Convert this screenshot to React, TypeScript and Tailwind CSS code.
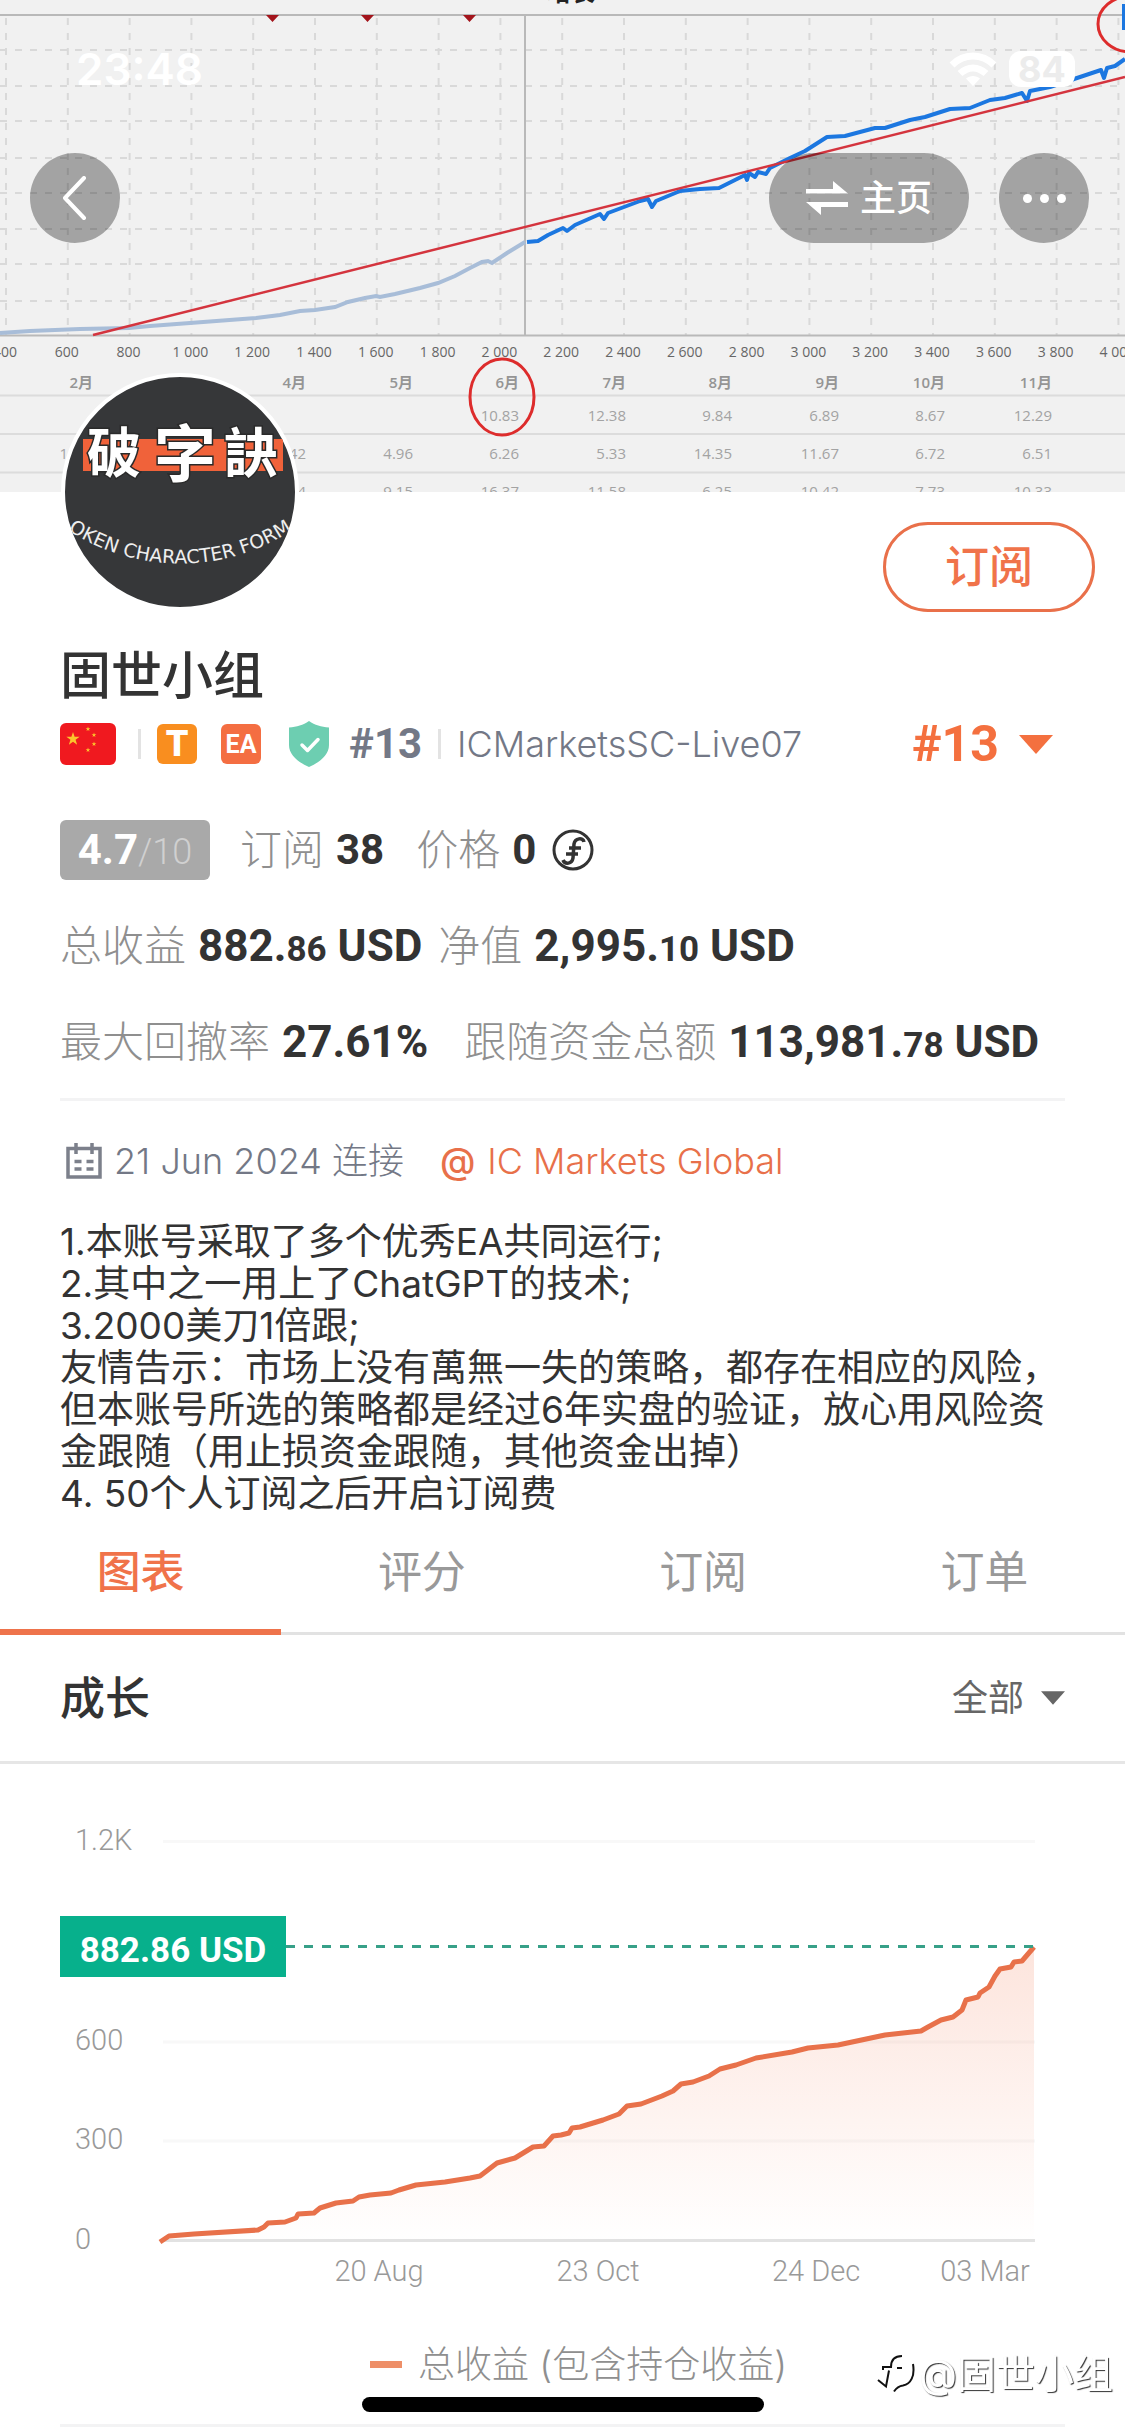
import { useState } from "react";
import { clsx } from "clsx";

const tabs = ["图表", "评分", "订阅", "订单"];

const coverTicks = [
  "400", "600", "800", "1 000", "1 200", "1 400", "1 600", "1 800", "2 000", "2 200",
  "2 400", "2 600", "2 800", "3 000", "3 200", "3 400", "3 600", "3 800", "4 000",
];

// right edge of every month column in the cover table
const coverMonths = [
  { x: 68, values: ["", "", "1", ""] },
  { x: 93, values: ["2月", "", "", ""] },
  { x: 306, values: ["4月", "", "42", "4"] },
  { x: 413, values: ["5月", "", "4.96", "9.15"] },
  { x: 519, values: ["6月", "10.83", "6.26", "16.37"] },
  { x: 626, values: ["7月", "12.38", "5.33", "11.58"] },
  { x: 732, values: ["8月", "9.84", "14.35", "6.25"] },
  { x: 839, values: ["9月", "6.89", "11.67", "10.42"] },
  { x: 945, values: ["10月", "8.67", "6.72", "7.73"] },
  { x: 1052, values: ["11月", "12.29", "6.51", "10.33"] },
];

const coverRows = [388, 421, 459, 497];

const growthLine =
  "160,478 169,472 194,470 258,466 264,463 268,459 285,458 296,454 298,450 314,449 320,444 336,439 353,437 359,433 370,431 391,429 399,426 416,421 445,418 470,414 480,412 497,399 515,394 533,383 544,382 553,372 561,371 569,369 572,364 580,363 603,356 619,350 627,342 641,340 662,332 673,327 681,320 693,318 709,312 720,305 736,301 756,294 792,288 808,284 838,281 885,271 921,267 928,263 941,256 953,253 962,246 966,236 978,233 980,229 989,223 995,212 1000,205 1011,203 1014,198 1022,197 1034,183";

const Cover = () => (
  <svg
    viewBox="0 0 1125 492"
    preserveAspectRatio="xMidYMid slice"
    className="block h-[492px] w-full bg-[#f1f1f1]"
    fontFamily="'Open Sans', 'Noto Sans CJK SC', sans-serif"
  >
    <text x="571" y="1" textAnchor="middle" fontSize="24" fontWeight="700" fill="#222">
      增长
    </text>
    <g stroke="#d9d9d9" strokeWidth="2" strokeDasharray="7 8">
      {coverTicks.map((tick, i) => (
        <line key={tick} x1={6 + i * 61.8} x2={6 + i * 61.8} y1="18" y2="335" />
      ))}
      {[50, 86, 121, 158, 193, 229, 264, 301].map((y) => (
        <line key={y} x1="0" x2="1125" y1={y} y2={y} />
      ))}
    </g>
    <path d="M0 15H1125M0 335.500H1125M525 15V335" stroke="#b9b9b9" strokeWidth="2" />
    <path d="M266 15h13l-6.500 7zM361 15h13l-6.500 7zM463 15h13l-6.500 7z" fill="#a3151c" />
    <polyline
      points="0,333 30,331 55,330 80,329 129,328 150,326 190,323 256,318 280,315 300,311 315,310 335,307 348,302 365,298 376,296 380,297 395,294 420,288 438,283 455,276 470,268 482,262 488,261 492,263 507,253 525,242"
      fill="none"
      stroke="#a8bdd8"
      strokeWidth="4"
    />
    <polyline
      points="527,242 538,241 548,235 563,228 567,231 575,225 600,214 604,219 608,213 640,201 648,199 652,207 656,201 680,191 700,189 719,188 735,180 745,175 747,180 749,173 755,177 758,172 766,174 770,168 790,158 805,151 827,137 845,136 860,132 875,128 885,128 910,120 925,117 950,109 970,108 990,100 1005,98 1022,93 1027,101 1030,91 1050,87 1062,83 1080,77 1101,70 1104,78 1107,68 1115,66 1125,59"
      fill="none"
      stroke="#1c77e0"
      strokeWidth="4"
      strokeLinejoin="round"
    />
    <path d="M93 335L1125 77" stroke="#d4343e" strokeWidth="2.500" />
    <path d="M1124 4v26" stroke="#1c77e0" strokeWidth="4" />
    <g fill="#666" fontSize="14" textAnchor="middle">
      {coverTicks.map((tick, i) => (
        <text key={tick} x={5 + i * 61.8} y="357">
          {tick}
        </text>
      ))}
    </g>
    <path d="M0 395.500H1125M0 434H1125M0 472.500H1125" stroke="#dcdcdc" strokeWidth="2" />
    {coverMonths.map((month) => (
      <g key={month.x} textAnchor="end" fontSize="15">
        {month.values.map((value, i) => (
          <text
            key={i}
            x={month.x}
            y={coverRows[i]}
            fill={i === 0 ? "#959595" : "#a3a3a3"}
            fontWeight={i === 0 ? 600 : 400}
          >
            {value}
          </text>
        ))}
      </g>
    ))}
    <g fill="none" stroke="#dd2c2c" strokeWidth="3">
      <ellipse cx="502" cy="397" rx="32" ry="38" />
      <ellipse cx="1131" cy="24" rx="33" ry="28" />
    </g>
  </svg>
);

const StatusBar = () => (
  <div className="absolute inset-x-0 top-0 flex h-[138px] items-center justify-between pr-[50px] pl-[76px] text-white">
    <span className="font-[Inter,sans-serif] text-[44px] leading-none font-semibold">23:48</span>
    <div className="flex items-center gap-3">
      <svg viewBox="0 0 48 34" className="h-[34px] w-12" fill="none" stroke="white" strokeWidth="7">
        <path d="M3 13C15 1 33 1 45 13" />
        <path d="M11 21.500C19 14 29 14 37 21.500" />
        <path d="M24 34l-7-7.500c4-3.500 10-3.500 14 0z" fill="white" stroke="none" />
      </svg>
      <div className="flex h-9 w-[66px] items-center justify-center rounded-xl bg-white font-[Inter,sans-serif] text-[36px] leading-none font-bold text-[#ececec]">
        84
      </div>
    </div>
  </div>
);

const CoverActions = () => (
  <div className="absolute inset-x-0 top-[153px] flex gap-[30px] pr-9 pl-[30px]">
    <button
      aria-label="返回"
      className="mr-auto flex size-[90px] items-center justify-center rounded-full bg-black/32"
    >
      <svg viewBox="0 0 24 44" className="h-11 w-6" fill="none" stroke="white" strokeWidth="4">
        <path d="M21 2L2 22l19 20" strokeLinecap="round" strokeLinejoin="round" />
      </svg>
    </button>
    <button className="flex h-[90px] w-[200px] items-center justify-center gap-3 rounded-full bg-black/32 text-4xl font-medium text-white">
      <svg viewBox="0 0 42 34" className="h-[34px] w-[42px]" fill="white">
        <path d="M0 8h27V0l15 12.500H0zM42 26H15v8L0 21h42z" />
      </svg>
      主页
    </button>
    <button
      aria-label="更多"
      className="flex size-[90px] items-center justify-center gap-2 rounded-full bg-black/32"
    >
      <span className="size-[9px] rounded-full bg-white" />
      <span className="size-[9px] rounded-full bg-white" />
      <span className="size-[9px] rounded-full bg-white" />
    </button>
  </div>
);

const Avatar = () => (
  <svg
    viewBox="0 0 230 230"
    className="-mt-[119px] size-[238px] shrink-0 rounded-full border-4 border-white bg-[#363739]"
  >
    <path d="M18 62H218V94H18z" fill="#f0623a" />
    <g
      fill="white"
      stroke="#2a2a2a"
      strokeWidth="3"
      paintOrder="stroke"
      fontFamily="'Noto Sans CJK TC', sans-serif"
      fontWeight="700"
      textAnchor="middle"
    >
      <text x="49" y="96" fontSize="54">破</text>
      <text x="120" y="100" fontSize="62">字</text>
      <text x="186" y="96" fontSize="54">訣</text>
    </g>
    <path id="avatar-arc" d="M-6 147A205 205 0 0 0 236 147" fill="none" />
    <text fill="#eee" fontSize="19" fontFamily="'DejaVu Sans', sans-serif" textAnchor="middle">
      <textPath href="#avatar-arc" startOffset="50%">
        OKEN CHARACTER FORM
      </textPath>
    </text>
  </svg>
);

const star = "M0-10L2.300-3.200H9.500L3.700 1.200L5.900 8.100L0 3.900L-5.900 8.100L-3.700 1.200L-9.500-3.200H-2.300z";

const Flag = () => (
  <svg viewBox="0 0 56 42" className="h-[42px] w-14 rounded-md bg-[#f0191f]" fill="#fbc52c">
    <path d={star} transform="translate(13 16) scale(.7)" />
    <path d={star} transform="translate(28 6) scale(.25)" />
    <path d={star} transform="translate(34 12) scale(.25)" />
    <path d={star} transform="translate(34 21) scale(.25)" />
    <path d={star} transform="translate(28 27) scale(.25)" />
  </svg>
);

const IconShield = () => (
  <svg viewBox="0 0 40 46" className="h-[46px] w-10">
    <path
      d="M20 0c6 4 12 6 20 6.500V24c0 10-9 17-20 22C9 41 0 34 0 24V6.500C8 6 14 4 20 0z"
      fill="#6dceb1"
    />
    <path
      d="M13 24l5.500 5.500L29 18.500"
      fill="none"
      stroke="white"
      strokeWidth="3.500"
      strokeLinecap="round"
      strokeLinejoin="round"
    />
  </svg>
);

const IconCoin = () => (
  <svg viewBox="0 0 42 42" className="size-[42px]" fill="none" stroke="#333" strokeWidth="3">
    <circle cx="21" cy="21" r="19" />
    <path
      d="M32 13c-1-5-9-4-10 2l-1 14c-1 6-8 7-10 2M17 19h12M14 25h12"
      strokeWidth="3.500"
    />
  </svg>
);

const IconCalendar = () => (
  <svg viewBox="0 0 36 36" className="size-9" fill="none" stroke="#7c808b" strokeWidth="3.500">
    <path d="M2 5.500H34V34H2zM10 0v11M26 0v11M8.500 18.500h7M20.500 18.500h7M8.500 26h7M20.500 26h7" />
  </svg>
);

const CaretDown = ({ className }: { className: string }) => (
  <svg viewBox="0 0 34 19" className={className} fill="currentColor">
    <path d="M0 0H34L17 19z" />
  </svg>
);

const Amount = ({ value, cents }: { value: string; cents: string }) => (
  <span className="ml-3 font-[Roboto,sans-serif] text-[44px] font-bold text-[#333]">
    {value}.<span className="text-[35px]">{cents}</span> USD
  </span>
);

const GrowthChart = () => (
  <svg
    viewBox="0 0 1125 540"
    className="block h-auto w-full"
    fontFamily="Roboto, sans-serif"
    fontWeight="300"
  >
    <defs>
      <linearGradient id="growth-fill" x1="0" y1="0" x2="0" y2="1">
        <stop offset="0" stopColor="#f26b3f" stopOpacity=".18" />
        <stop offset="1" stopColor="#f26b3f" stopOpacity="0" />
      </linearGradient>
    </defs>
    <path d="M163 77.500H1035M163 278H1035M163 377H1035" stroke="#f8f8f8" strokeWidth="3" />
    <polygon points={`${growthLine} 1034,476 160,476`} fill="url(#growth-fill)" />
    <path d="M160 476.500H1035" stroke="#e2e2e2" strokeWidth="3" />
    <polyline
      points={growthLine}
      fill="none"
      stroke="#e8714a"
      strokeWidth="5"
      strokeLinejoin="round"
    />
    <path d="M286 182.500H1035" stroke="#37a088" strokeWidth="3" strokeDasharray="9 9" />
    <path d="M60 152H286V213H60z" fill="#07b08c" />
    <text x="173" y="198" fontSize="35" fontWeight="700" fill="white" textAnchor="middle">
      882.86 USD
    </text>
    <g fill="#999" fontSize="29">
      <text x="75" y="86">1.2K</text>
      <text x="75" y="286">600</text>
      <text x="75" y="385">300</text>
      <text x="75" y="485">0</text>
      <text x="379" y="517" textAnchor="middle">20 Aug</text>
      <text x="598" y="517" textAnchor="middle">23 Oct</text>
      <text x="816" y="517" textAnchor="middle">24 Dec</text>
      <text x="985" y="517" textAnchor="middle">03 Mar</text>
    </g>
  </svg>
);

const Watermark = () => (
  <div className="fixed right-3 bottom-8 flex items-center gap-1 text-[39px] leading-[60px] text-white [text-shadow:1px_1px_1px_#333]">
    <svg viewBox="0 0 38 42" className="h-[42px] w-[38px]" fill="none" stroke="#111" strokeWidth="2">
      <path d="M1 27l8 6.500 3-16M6 17v-3h8c0-7 3-11 11-11M20 15h5M36 11c2 12-2 20-10 21.500-4 .5-7 3-9 6" />
    </svg>
    @固世小组
  </div>
);

const App = () => {
  const [activeTab, setActiveTab] = useState(tabs[0]);

  return (
    <div className="bg-white font-[Inter,'Noto_Sans_CJK_SC',sans-serif] text-[#333]">
      <header className="relative">
        <Cover />
        <StatusBar />
        <CoverActions />
      </header>

      <section className="relative">
        <div className="flex items-start justify-between pr-[30px] pl-[61px]">
          <Avatar />
          <button className="mt-[30px] h-[90px] w-[212px] rounded-full border-3 border-[#e9704a] text-[44px] leading-none font-medium text-[#f0734a]">
            订阅
          </button>
        </div>

        <div className="px-[60px]">
          <h1 className="mt-8 text-[51px] leading-[64px] font-medium">固世小组</h1>
          <div className="mt-3 flex h-12 items-center">
            <Flag />
            <span className="mr-4 ml-[22px] h-[30px] w-[3px] bg-[#e3e3e3]" />
            <span className="flex size-10 items-center justify-center rounded-md bg-[#f98e1f] font-[Roboto,sans-serif] text-[36px] leading-none font-black text-white">
              T
            </span>
            <span className="ml-6 flex size-10 items-center justify-center rounded-md bg-[#f46e42] font-[Roboto,sans-serif] text-[25px] leading-none font-bold text-white">
              EA
            </span>
            <span className="ml-7">
              <IconShield />
            </span>
            <span className="ml-5 font-[Roboto,sans-serif] text-[42px] leading-none font-bold text-[#737886]">
              #13
            </span>
            <span className="mx-4 h-[30px] w-[3px] bg-[#e3e3e3]" />
            <span className="text-4xl leading-none font-light text-[#737886]">
              ICMarketsSC-Live07
            </span>
            <button className="mr-3 ml-auto flex items-center gap-5 font-[Roboto,sans-serif] text-[50px] leading-none font-bold text-[#f4703f]">
              #13
              <CaretDown className="h-[19px] w-[34px]" />
            </button>
          </div>

          <div className="mt-[52px] flex flex-col gap-9 text-[42px] leading-[60px] font-light whitespace-nowrap text-[#8f8f8f]">
            <div className="flex h-[60px] items-center">
              <span className="flex h-[60px] w-[150px] items-baseline justify-center rounded-md bg-[#a9a9a9] font-[Roboto,sans-serif]">
                <b className="text-[42px] font-bold text-white">4.7</b>
                <span className="text-4xl font-light text-[#d0d0d0]">/10</span>
              </span>
              <span className="ml-[30px]">订阅</span>
              <b className="ml-3 font-[Roboto,sans-serif] font-bold text-[#333]">38</b>
              <span className="ml-8">价格</span>
              <b className="mr-4 ml-3 font-[Roboto,sans-serif] font-bold text-[#333]">0</b>
              <IconCoin />
            </div>
            <div className="flex h-[60px] items-baseline">
              总收益
              <Amount value="882" cents="86" />
              <span className="ml-4">净值</span>
              <Amount value="2,995" cents="10" />
            </div>
            <div className="flex h-[60px] items-baseline">
              最大回撤率
              <b className="ml-3 font-[Roboto,sans-serif] text-[44px] font-bold text-[#333]">
                27.61%
              </b>
              <span className="ml-9">跟随资金总额</span>
              <Amount value="113,981" cents="78" />
            </div>
          </div>

          <hr className="mt-[26px] h-[3px] border-0 bg-[#f3f3f4]" />

          <div className="mt-9 flex h-12 items-center pl-[6px] text-4xl leading-none font-light">
            <IconCalendar />
            <span className="ml-3 text-[#737886]">21 Jun 2024 连接</span>
            <a href="#broker" className="ml-9 flex items-center gap-3 text-[#e8704a]">
              <span className="font-medium">@</span>
              <span>IC Markets Global</span>
            </a>
          </div>

          <p className="mt-9 text-[37px] leading-[42px] whitespace-pre-line">
            {`1.本账号采取了多个优秀EA共同运行;
            2.其中之一用上了ChatGPT的技术;
            3.2000美刀1倍跟;
            友情告示：市场上没有萬無一失的策略，都存在相应的风险，但本账号所选的策略都是经过6年实盘的验证，放心用风险资金跟随（用止损资金跟随，其他资金出掉）
            4. 50个人订阅之后开启订阅费`}
          </p>
        </div>
      </section>

      <nav className="flex h-[120px] border-b-3 border-[#e2e2e2]">
        {tabs.map((tab) => (
          <button
            key={tab}
            onClick={() => setActiveTab(tab)}
            className={clsx(
              "-mb-[3px] flex-1 border-b-6 text-[44px] leading-none",
              activeTab === tab
                ? "border-[#ee734b] font-medium text-[#f0734a]"
                : "border-transparent text-[#999]"
            )}
          >
            {tab}
          </button>
        ))}
      </nav>

      <section>
        <div className="flex h-[129px] items-center justify-between border-b-3 border-[#e6e6e6] px-[60px]">
          <h2 className="text-[45px] leading-none font-medium">成长</h2>
          <label className="relative flex items-center text-[#666]">
            <select
              aria-label="时间范围"
              className="h-12 w-[113px] appearance-none bg-transparent text-4xl leading-none"
            >
              <option>全部</option>
            </select>
            <CaretDown className="pointer-events-none absolute right-0 h-4 w-6" />
          </label>
        </div>
        <GrowthChart />
        <div className="mt-9 flex h-12 items-center justify-center gap-4 pl-8 text-[37px] leading-none font-light text-[#8f8f8f]">
          <span className="h-[7px] w-8 bg-[#ee8f68]" />
          总收益 (包含持仓收益)
        </div>
        <div className="px-[60px] pt-9 pb-2">
          <hr className="h-[3px] border-0 bg-[#f3f3f4]" />
        </div>
      </section>

      <div className="fixed bottom-6 left-1/2 h-[15px] w-[402px] -translate-x-1/2 rounded-full bg-black" />
      <Watermark />
    </div>
  );
};

export default App;
